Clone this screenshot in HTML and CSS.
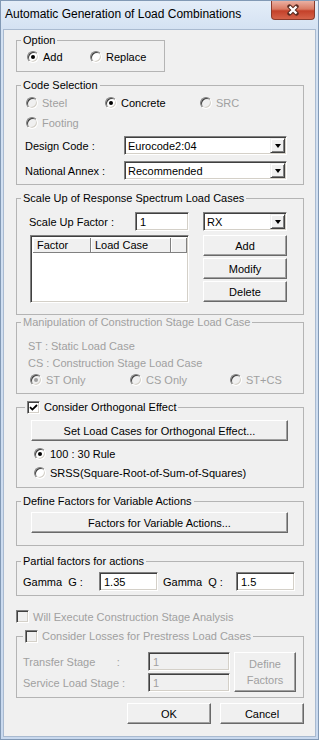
FILE: index.html
```html
<!DOCTYPE html>
<html lang="en">
<head>
    <meta charset="UTF-8">
    <meta name="viewport" content="width=device-width, initial-scale=1.0">
    <title>Automatic Generation of Load Combinations</title>
    <link rel="stylesheet" href="styles.css">
</head>
<body>

<div class="window">
    <div class="titlebar">
        <span class="title">Automatic Generation of Load Combinations</span>
        <div class="close">
            <svg width="14" height="12" viewBox="0 0 14 12">
                <path d="M3.5 2.5 L10.5 9.5 M10.5 2.5 L3.5 9.5" stroke="#5a2b20" stroke-width="4.4" stroke-linecap="round"/>
                <path d="M3.5 2.5 L10.5 9.5 M10.5 2.5 L3.5 9.5" stroke="#fff" stroke-width="2.4"/>
            </svg>
        </div>
    </div>

    <div class="client">

        <!-- Option -->
        <fieldset class="group grp-option">
            <legend>Option</legend>
            <div class="opt-row">
                <label class="opt"><span class="radio on"></span>Add</label>
                <label class="opt"><span class="radio"></span>Replace</label>
            </div>
        </fieldset>

        <!-- Code selection -->
        <fieldset class="group grp-code">
            <legend>Code Selection</legend>
            <div class="code-row">
                <label class="opt off"><span class="radio dis"></span>Steel</label>
                <label class="opt"><span class="radio on"></span>Concrete</label>
                <label class="opt off"><span class="radio dis"></span>SRC</label>
            </div>
            <div class="code-row">
                <label class="opt off"><span class="radio dis"></span>Footing</label>
            </div>
            <div class="combo-row">
                <span>Design Code :</span>
                <div class="combo"><span>Eurocode2:04</span><span class="drop"></span></div>
            </div>
            <div class="combo-row">
                <span>National Annex :</span>
                <div class="combo"><span>Recommended</span><span class="drop"></span></div>
            </div>
        </fieldset>

        <!-- Scale up -->
        <fieldset class="group grp-scale">
            <legend>Scale Up of Response Spectrum Load Cases</legend>
            <div class="scale-row">
                <span class="scale-label">Scale Up Factor :</span>
                <div class="field scale-input">1</div>
                <div class="combo scale-combo"><span>RX</span><span class="drop"></span></div>
            </div>
            <div class="scale-list">
                <div class="list">
                    <div class="list-head">
                        <span class="col-factor">Factor</span>
                        <span class="col-case">Load Case</span>
                        <span class="col-rest"></span>
                    </div>
                </div>
                <div class="side-btns">
                    <div class="btn">Add</div>
                    <div class="btn">Modify</div>
                    <div class="btn">Delete</div>
                </div>
            </div>
        </fieldset>

        <!-- Construction stage (disabled) -->
        <fieldset class="group grp-manip off">
            <legend>Manipulation of Construction Stage Load Case</legend>
            <div class="manip-text">ST : Static Load Case</div>
            <div class="manip-text">CS : Construction Stage Load Case</div>
            <div class="manip-row">
                <label class="opt"><span class="radio dis on"></span>ST Only</label>
                <label class="opt"><span class="radio dis"></span>CS Only</label>
                <label class="opt"><span class="radio dis"></span>ST+CS</label>
            </div>
        </fieldset>

        <!-- Orthogonal effect -->
        <fieldset class="group grp-orth">
            <legend class="chk-legend">
                <span class="check">
                    <svg width="9" height="9" viewBox="0 0 9 9"><path d="M1 4.2 L3.4 6.6 L8 2" stroke="#000" stroke-width="1.8" fill="none"/></svg>
                </span>Consider Orthogonal Effect
            </legend>
            <div class="btn wide-btn">Set Load Cases for Orthogonal Effect...</div>
            <label class="opt orth-opt"><span class="radio on"></span>100 : 30 Rule</label>
            <label class="opt orth-opt"><span class="radio"></span>SRSS(Square-Root-of-Sum-of-Squares)</label>
        </fieldset>

        <!-- Variable actions -->
        <fieldset class="group grp-define">
            <legend>Define Factors for Variable Actions</legend>
            <div class="btn wide-btn">Factors for Variable Actions...</div>
        </fieldset>

        <!-- Partial factors -->
        <fieldset class="group grp-partial">
            <legend>Partial factors for actions</legend>
            <div class="partial-row">
                <span>Gamma&nbsp; G :</span>
                <div class="field">1.35</div>
                <span>Gamma&nbsp; Q :</span>
                <div class="field">1.5</div>
            </div>
        </fieldset>

        <label class="chk-row off"><span class="check dis"></span>Will Execute Construction Stage Analysis</label>

        <!-- Prestress losses (disabled) -->
        <fieldset class="group grp-loss off">
            <legend class="chk-legend"><span class="check dis"></span>Consider Losses for Prestress Load Cases</legend>
            <div class="loss-body">
                <div class="loss-fields">
                    <div class="loss-row">
                        <span>Transfer Stage&nbsp;&nbsp;&nbsp;&nbsp;&nbsp;&nbsp;&nbsp;:</span>
                        <div class="field dis">1</div>
                    </div>
                    <div class="loss-row">
                        <span>Service Load Stage :</span>
                        <div class="field dis">1</div>
                    </div>
                </div>
                <div class="btn loss-btn">Define<br>Factors</div>
            </div>
        </fieldset>

        <div class="dialog-btns">
            <div class="btn">OK</div>
            <div class="btn">Cancel</div>
        </div>

    </div>
</div>

</body>
</html>
```

FILE: styles.css
```css
* {
    box-sizing: border-box;
}

body {
    margin: 0;
    font-family: "Liberation Sans", Arial, sans-serif;
    font-size: 11px;
    color: #000;
    background: #fff;
}

/* window frame */
.window {
    width: 319px;
    height: 740px;
    border: 1px solid #8299b5;
    background: linear-gradient(#e4edf8, #d3e1f2 30px, #c9d9ee);
    display: flex;
    flex-direction: column;
}

.titlebar {
    height: 28px;
    display: flex;
    justify-content: space-between;
    align-items: flex-start;
    padding-left: 4px;
}

.title {
    font-size: 12px;
    line-height: 14px;
    margin-top: 6px;
}

.close {
    width: 44px;
    height: 19px;
    margin-right: 3px;
    border: 1px solid #8b3a2b;
    border-top: none;
    border-radius: 0 0 4px 4px;
    background: linear-gradient(#eab0a2, #d97a63 45%, #c4412a 55%, #d5634a);
    display: flex;
    align-items: center;
    justify-content: center;
}

.client {
    flex: 1;
    margin: 0 2px 2px;
    border: 1px solid #a9bad0;
    background: #f0f0f0;
    display: flex;
    flex-direction: column;
}

/* group boxes */
.group {
    margin: 0 0 0 12px;
    padding: 0;
    width: 288px;
    min-inline-size: 0;
    border: 1px solid #b4b4b4;
}

.group legend {
    margin-left: 4px;
    padding: 0 2px;
    height: 13px;
    line-height: 13px;
}

.off {
    color: #a0a0a0;
}

/* radios and checks */
.opt {
    display: flex;
    align-items: center;
    gap: 4px;
    height: 14px;
    white-space: nowrap;
}

.radio {
    width: 12px;
    height: 12px;
    flex: none;
    border-radius: 50%;
    background: #fff;
    border: 1px solid;
    border-color: #808080 #fff #fff #808080;
    box-shadow: inset 1px 1px 0 #404040, inset -1px -1px 0 #d4d0c8;
    display: flex;
    align-items: center;
    justify-content: center;
}

.radio.on::after {
    content: "";
    width: 4px;
    height: 4px;
    border-radius: 50%;
    background: #000;
}

.radio.dis {
    background: #f0f0f0;
}

.radio.dis.on::after {
    background: #a0a0a0;
}

.check {
    width: 13px;
    height: 13px;
    flex: none;
    background: #fff;
    border: 1px solid;
    border-color: #808080 #fff #fff #808080;
    box-shadow: inset 1px 1px 0 #404040, inset -1px -1px 0 #d4d0c8;
    display: flex;
    align-items: center;
    justify-content: center;
}

.check.dis {
    background: #f0f0f0;
}

.chk-legend {
    display: flex;
    align-items: center;
    gap: 4px;
}

/* fields */
.field {
    height: 19px;
    background: #fff;
    border: 1px solid;
    border-color: #808080 #fff #fff #808080;
    box-shadow: inset 1px 1px 0 #404040, inset -1px -1px 0 #d4d0c8;
    padding-left: 4px;
    display: flex;
    align-items: center;
}

.field.dis {
    background: #f0f0f0;
    color: #a0a0a0;
}

.combo {
    height: 19px;
    background: #fff;
    border: 1px solid;
    border-color: #808080 #fff #fff #808080;
    box-shadow: inset 1px 1px 0 #404040, inset -1px -1px 0 #d4d0c8;
    padding: 0 1px 0 3px;
    display: flex;
    align-items: center;
}

.drop {
    margin-left: auto;
    width: 15px;
    height: 15px;
    background: #f0f0f0;
    border: 1px solid;
    border-color: #f0f0f0 #404040 #404040 #f0f0f0;
    box-shadow: inset 1px 1px 0 #fff, inset -1px -1px 0 #808080;
    display: flex;
    align-items: center;
    justify-content: center;
}

.drop::after {
    content: "";
    border-left: 3.5px solid transparent;
    border-right: 3.5px solid transparent;
    border-top: 4px solid #000;
}

.btn {
    height: 21px;
    background: #f0f0f0;
    border: 1px solid;
    border-color: #fff #696969 #696969 #fff;
    box-shadow: inset -1px -1px 0 #a0a0a0;
    display: flex;
    align-items: center;
    justify-content: center;
    text-align: center;
}

/* option */
.grp-option {
    width: 149px;
    height: 38px;
    margin-top: 4px;
}

.opt-row {
    display: grid;
    grid-template-columns: 63px auto;
    margin: 3px 0 0 10px;
}

/* code selection */
.grp-code {
    height: 106px;
    margin-top: 7px;
    padding-top: 4px;
}

.code-row {
    display: grid;
    grid-template-columns: 79px 95px auto;
    margin: 0 0 6px 9px;
}

.combo-row {
    display: grid;
    grid-template-columns: 99px 163px;
    align-items: center;
    margin: 0 0 6px 8px;
}

/* scale up */
.grp-scale {
    height: 123px;
    margin-top: 7px;
    padding-top: 7px;
}

.scale-row {
    display: flex;
    align-items: center;
    margin-left: 12px;
}

.scale-label {
    width: 106px;
}

.scale-input {
    width: 54px;
}

.scale-combo {
    width: 84px;
    margin-left: 14px;
}

.scale-list {
    display: flex;
    margin: 4px 0 0 13px;
}

.list {
    width: 159px;
    height: 68px;
    background: #fff;
    border: 1px solid;
    border-color: #808080 #fff #fff #808080;
    box-shadow: inset 1px 1px 0 #404040, inset -1px -1px 0 #d4d0c8;
    padding: 2px 1px 0 2px;
}

.list-head {
    display: flex;
    height: 15px;
}

.list-head span {
    background: #f0f0f0;
    border-right: 1px solid #808080;
    border-bottom: 1px solid #808080;
    box-shadow: inset 1px 1px 0 #fff;
    padding-left: 4px;
    line-height: 14px;
}

.col-factor {
    width: 58px;
}

.col-case {
    width: 80px;
}

.col-rest {
    flex: 1;
}

.side-btns {
    width: 84px;
    margin-left: 14px;
    display: flex;
    flex-direction: column;
    gap: 2px;
}

/* construction stage */
.grp-manip {
    height: 78px;
    margin-top: 1px;
    padding-top: 10px;
}

.manip-text {
    height: 14px;
    line-height: 14px;
    margin: 0 0 3px 11px;
}

.manip-row {
    display: grid;
    grid-template-columns: 100px 100px auto;
    margin-left: 13px;
}

/* orthogonal */
.grp-orth {
    height: 87px;
    margin-top: 7px;
    padding-top: 6px;
}

.grp-orth .chk-legend {
    margin-left: 8px;
}

.wide-btn {
    width: 257px;
    margin-left: 14px;
}

.orth-opt {
    margin: 6px 0 0 17px;
}

.orth-opt + .orth-opt {
    margin-top: 5px;
}

/* variable actions */
.grp-define {
    height: 51px;
    margin-top: 7px;
    padding-top: 4px;
}

/* partial factors */
.grp-partial {
    height: 41px;
    margin-top: 9px;
    padding-top: 4px;
}

.partial-row {
    display: grid;
    grid-template-columns: 76px 59px 5px 73px 59px;
    align-items: center;
    margin-left: 6px;
}

.partial-row span:nth-of-type(2) {
    grid-column: 4;
}

/* construction stage analysis */
.chk-row {
    display: flex;
    align-items: center;
    gap: 4px;
    height: 13px;
    margin: 14px 0 0 12px;
}

.grp-loss {
    height: 68px;
    margin-top: 7px;
    padding-top: 9px;
}

.grp-loss .chk-legend {
    margin-left: 6px;
}

.loss-body {
    display: flex;
    margin-left: 6px;
}

.loss-fields {
    display: flex;
    flex-direction: column;
    gap: 2px;
}

.loss-row {
    display: grid;
    grid-template-columns: 125px 82px;
    align-items: center;
}

.loss-btn {
    width: 62px;
    height: 40px;
    margin-left: 4px;
    line-height: 16px;
}

/* dialog buttons */
.dialog-btns {
    display: flex;
    gap: 9px;
    margin: 5px 0 0 123px;
}

.dialog-btns .btn {
    width: 84px;
}
```
